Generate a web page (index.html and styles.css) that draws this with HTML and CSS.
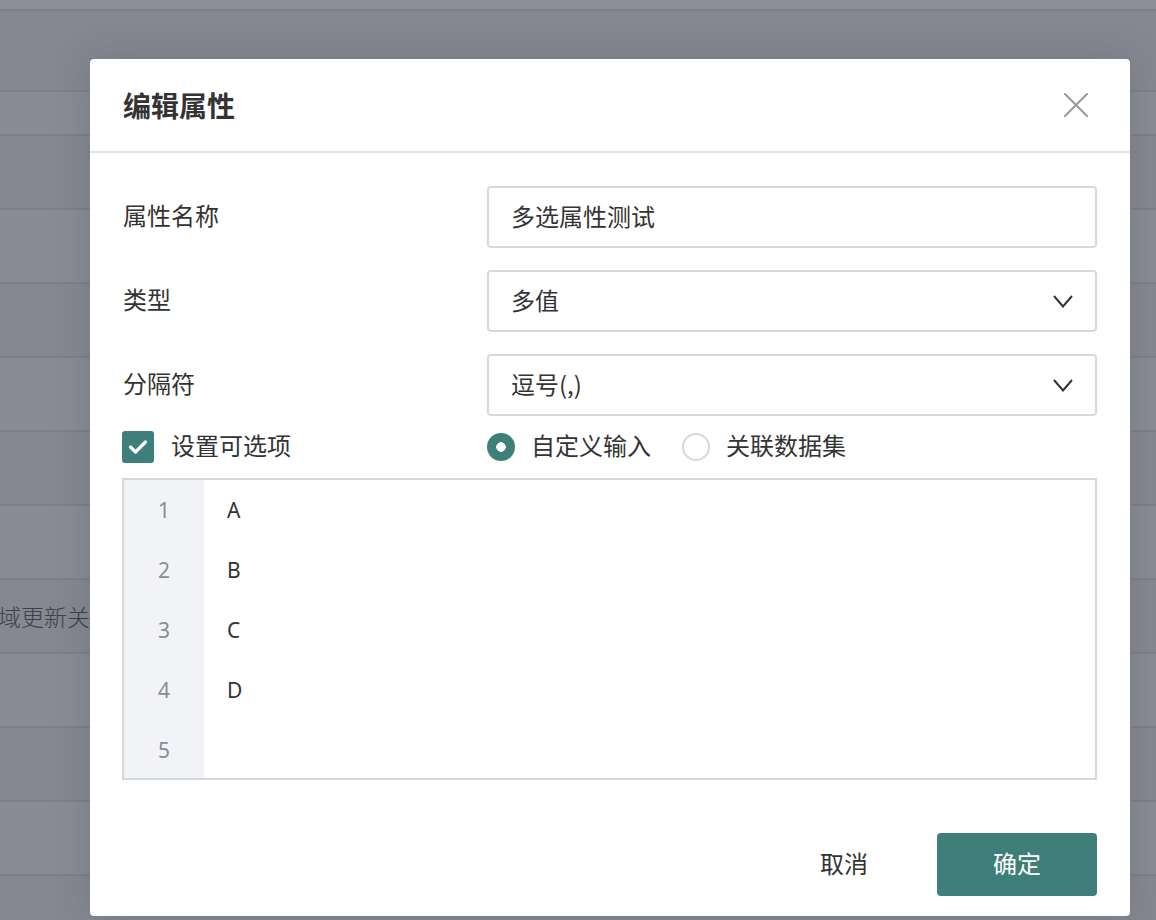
FILE: index.html
```html
<!DOCTYPE html>
<html lang="zh-CN">
<head>
<meta charset="utf-8">
<title>编辑属性</title>
<link rel="stylesheet" href="styles.css">
</head>
<body>
<div class="page">
  <div class="table">
    <div class="row row-top"></div>
    <div class="row row-head dark"></div>
    <div class="row row-short light"></div>
    <div class="row dark"></div>
    <div class="row light"></div>
    <div class="row dark"></div>
    <div class="row light"></div>
    <div class="row dark"></div>
    <div class="row light"></div>
    <div class="row dark"><span class="cell-text">域更新关联</span></div>
    <div class="row light"></div>
    <div class="row dark"></div>
    <div class="row light"></div>
    <div class="row dark"></div>
  </div>

  <div class="modal">
    <div class="modal-header">
      <h2 class="modal-title">编辑属性</h2>
      <button class="close-btn" aria-label="关闭">
        <svg width="24" height="24" viewBox="0 0 24 24"><path d="M1 1 L23 23 M23 1 L1 23" stroke="#999" stroke-width="2" fill="none" stroke-linecap="round"/></svg>
      </button>
    </div>
    <div class="modal-body">
      <div class="form-row">
        <label class="form-label">属性名称</label>
        <div class="field">多选属性测试</div>
      </div>
      <div class="form-row">
        <label class="form-label">类型</label>
        <div class="field select">
          <span>多值</span>
          <svg class="chevron" width="20" height="13" viewBox="0 0 20 13"><polyline points="1,1 10,11.5 19,1" stroke="#333" stroke-width="2" fill="none"/></svg>
        </div>
      </div>
      <div class="form-row">
        <label class="form-label">分隔符</label>
        <div class="field select">
          <span>逗号(,)</span>
          <svg class="chevron" width="20" height="13" viewBox="0 0 20 13"><polyline points="1,1 10,11.5 19,1" stroke="#333" stroke-width="2" fill="none"/></svg>
        </div>
      </div>
      <div class="option-row">
        <div class="check-item">
          <span class="checkbox">
            <svg width="20" height="16" viewBox="0 0 20 16"><polyline points="2.5,8 7.5,13 17.5,3" stroke="#fff" stroke-width="3.2" fill="none" stroke-linecap="round" stroke-linejoin="round"/></svg>
          </span>
          <span class="check-label">设置可选项</span>
        </div>
        <div class="radio-group">
          <div class="radio-item"><span class="radio checked"></span><span>自定义输入</span></div>
          <div class="radio-item"><span class="radio"></span><span>关联数据集</span></div>
        </div>
      </div>
      <div class="editor">
        <div class="gutter">
          <div class="ln">1</div>
          <div class="ln">2</div>
          <div class="ln">3</div>
          <div class="ln">4</div>
          <div class="ln">5</div>
        </div>
        <div class="code">
          <div class="line">A</div>
          <div class="line">B</div>
          <div class="line">C</div>
          <div class="line">D</div>
          <div class="line"></div>
        </div>
      </div>
    </div>
    <div class="modal-footer">
      <button class="btn-cancel">取消</button>
      <button class="btn-ok">确定</button>
    </div>
  </div>
</div>
</body>
</html>
```

FILE: styles.css
```css
* { box-sizing: border-box; }
html, body {
  margin: 0;
  padding: 0;
}
body {
  width: 1156px;
  height: 920px;
  overflow: hidden;
  font-family: "Noto Sans CJK SC", "Noto Sans", sans-serif;
  color: #333;
}
.page {
  position: relative;
  width: 1156px;
  height: 920px;
  background: #868993;
}
.table {
  display: flex;
  flex-direction: column;
}
.row {
  flex: none;
  height: 74px;
  border-bottom: 2px solid #7e818b;
  display: flex;
  align-items: center;
}
.row-top {
  height: 11px;
  background: #8b8e97;
}
.row-head { height: 81px; }
.row-short { height: 44px; }
.row.light { background: #898c95; }
.row.dark { background: #858892; }
.cell-text {
  font-size: 23px;
  font-weight: 300;
  color: #3d4048;
  margin-left: -2px;
  white-space: nowrap;
}

.modal {
  position: absolute;
  left: 90px;
  top: 59px;
  width: 1040px;
  height: 857px;
  background: #fff;
  border-radius: 4px;
  box-shadow: 0 0 40px rgba(40, 42, 50, 0.18);
  display: flex;
  flex-direction: column;
}
.modal-header {
  height: 94px;
  border-bottom: 2px solid #e3e5e8;
  display: flex;
  align-items: center;
  justify-content: space-between;
  padding: 0 42px 0 33px;
}
.modal-title {
  margin: 0;
  font-size: 28px;
  font-weight: 700;
  color: #333;
  line-height: 1;
}
.close-btn {
  border: 0;
  background: none;
  padding: 0;
  width: 24px;
  height: 24px;
  display: flex;
}
.modal-body {
  padding: 33px 33px 0 32px;
  display: flex;
  flex-direction: column;
}
.form-row {
  display: grid;
  grid-template-columns: 365px 610px;
  align-items: center;
  height: 62px;
  margin-bottom: 22px;
}
.form-row:nth-child(3) { margin-bottom: 15px; }
.form-label {
  font-size: 24px;
  line-height: 1.2;
  color: #333;
  padding-left: 1px;
  padding-bottom: 3px;
}
.field {
  height: 62px;
  border: 2px solid #d6d9dc;
  border-radius: 4px;
  display: flex;
  align-items: center;
  justify-content: space-between;
  padding: 0 22px 3px 22px;
  font-size: 24px;
  color: #333;
}
.field.select { padding-bottom: 0; }
.field.select span { padding-bottom: 3px; }
.chevron { display: block; }

.option-row {
  display: grid;
  grid-template-columns: 365px 610px;
  align-items: center;
  height: 32px;
  margin-bottom: 15px;
}
.check-item {
  display: flex;
  align-items: center;
  gap: 17px;
  font-size: 24px;
}
.check-label, .radio-item span:last-child {
  line-height: 1.2;
  padding-bottom: 3px;
}
.checkbox {
  width: 32px;
  height: 32px;
  border-radius: 3px;
  background: #3e7f7a;
  display: flex;
  align-items: center;
  justify-content: center;
}
.radio-group {
  display: flex;
  align-items: center;
  gap: 31px;
}
.radio-item {
  display: flex;
  align-items: center;
  gap: 16px;
  font-size: 24px;
  color: #333;
}
.radio {
  width: 28px;
  height: 28px;
  border-radius: 50%;
  border: 2px solid #d6d9dc;
  background: #fff;
  display: block;
}
.radio.checked {
  border: 0;
  background: radial-gradient(circle, #fff 0 4.5px, #3e7f7a 5px);
}

.editor {
  height: 302px;
  border: 2px solid #d6d9dc;
  display: flex;
}
.gutter {
  width: 80px;
  background: #f2f3f7;
}
.ln {
  height: 60px;
  line-height: 60px;
  text-align: center;
  font-family: "Noto Sans", sans-serif;
  font-size: 21px;
  color: #8a8d93;
}
.code {
  flex: 1;
  padding-left: 23px;
}
.line {
  height: 60px;
  line-height: 60px;
  font-family: "Noto Sans", sans-serif;
  font-size: 21px;
  color: #333;
}

.modal-footer {
  margin-top: auto;
  display: flex;
  justify-content: flex-end;
  align-items: center;
  padding: 0 33px 20px 0;
  gap: 23px;
}
.btn-cancel {
  width: 140px;
  height: 63px;
  border: 0;
  background: none;
  font-family: inherit;
  font-size: 24px;
  color: #333;
  padding: 0 0 4px;
}
.btn-ok {
  width: 160px;
  height: 63px;
  border: 0;
  border-radius: 4px;
  background: #3e7f7a;
  color: #fff;
  font-family: inherit;
  font-size: 24px;
  padding: 0 0 4px;
}
```
